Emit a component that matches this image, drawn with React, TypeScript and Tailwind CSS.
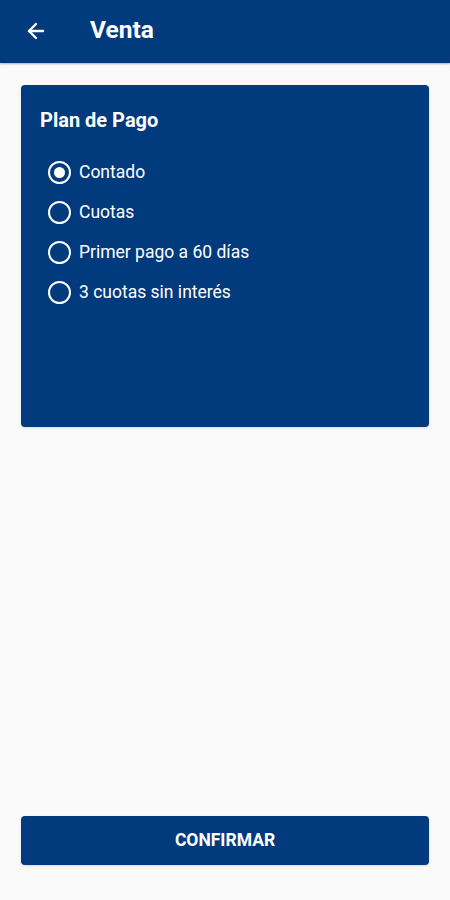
import { ArrowLeft } from "lucide-react";

const OPCIONES = ["Contado", "Cuotas", "Primer pago a 60 días", "3 cuotas sin interés"];

export default function App() {
  const seleccion = 0;
  return (
    <div className="flex h-[900px] w-[450px] flex-col bg-[#f9f9f9] font-['Roboto',sans-serif]">
      {/* Barra superior */}
      <header className="flex h-[63px] shrink-0 items-center bg-[#023a7e] pb-[2px] text-white shadow-[0_1px_2px_rgba(0,0,0,0.3)]">
        <ArrowLeft className="ml-[24px] h-[24px] w-[24px]" strokeWidth={2.4} />
        <h1 className="ml-[42px] text-[24.5px] font-bold">Venta</h1>
      </header>

      <main className="flex flex-1 flex-col px-[21px] pt-[22px]">
        {/* Tarjeta plan de pago */}
        <section className="h-[342px] rounded-[4px] bg-[#023a7e] px-[19px] pt-[23px] text-white shadow-sm">
          <h2 className="text-[20px] font-bold leading-[24px]">Plan de Pago</h2>
          <div className="mt-[29px] flex flex-col gap-[18px] pl-[8px]">
            {OPCIONES.map((op, i) => (
              <label key={op} className="flex h-[22px] items-center gap-[8px]">
                <span className="flex h-[23px] w-[23px] items-center justify-center rounded-full border-[2.5px] border-white">
                  {i === seleccion && <span className="h-[11px] w-[11px] rounded-full bg-white" />}
                </span>
                <span className="text-[17.5px] leading-[22px]">{op}</span>
              </label>
            ))}
          </div>
        </section>

        <div className="flex-1" />

        <button className="mb-[35px] h-[49px] w-full rounded-[4px] bg-[#023a7e] text-[17.5px] font-bold text-white shadow-sm">
          CONFIRMAR
        </button>
      </main>
    </div>
  );
}
